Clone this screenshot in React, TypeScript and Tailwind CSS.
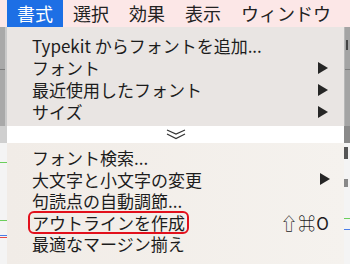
import React from "react";

const menuBar = ["書式", "選択", "効果", "表示", "ウィンドウ"];

const topItems = [
  { label: "Typekit からフォントを追加...", sub: false },
  { label: "フォント", sub: true },
  { label: "最近使用したフォント", sub: true },
  { label: "サイズ", sub: true },
];

const bottomItems = [
  { label: "フォント検索...", sub: false, key: "" },
  { label: "大文字と小文字の変更", sub: true, key: "" },
  { label: "句読点の自動調節...", sub: false, key: "" },
  { label: "アウトラインを作成", sub: false, key: "⇧⌘O", mark: true },
  { label: "最適なマージン揃え", sub: false, key: "" },
];

function Arrow() {
  return (
    <svg width="10" height="12" viewBox="0 0 10 12" className="shrink-0">
      <path d="M0 0 L10 6 L0 12 Z" fill="#262626" />
    </svg>
  );
}

export default function App() {
  return (
    <div
      className="flex h-[264px] w-[350px] flex-col overflow-hidden bg-white text-[#1c1c1c]"
      style={{ fontFamily: '"Noto Sans CJK JP", "Noto Sans", sans-serif' }}
    >
      {/* Menu bar */}
      <div className="flex h-[27px] shrink-0 items-center bg-[#fce7e7] pl-[7px] text-[18px] leading-[27px]">
        {menuBar.map((m, i) => (
          <div
            key={m}
            className={
              i === 0
                ? "flex h-full items-center bg-[#1d6fe5] px-[10px] text-white"
                : "flex h-full items-center px-[10px] text-[#222]"
            }
          >
            {m}
          </div>
        ))}
      </div>

      <div className="flex flex-1">
        {/* background window, left */}
        <div className="flex w-[7px] shrink-0 flex-col">
          <div className="h-[99px] border-r-[2px] border-[#c9c9c9] bg-[#a9a9a9]">
            <div className="mt-[42px] h-px bg-[#7d7d7d]" />
          </div>
          <div className="h-[17px] bg-[#cfcfcf]" />
          <div className="relative flex-1 bg-[#f4f4f4]">
            <div className="absolute left-0 right-0 top-[19px] h-px bg-[#6ccf5c]" />
            <div className="absolute left-0 right-0 top-[77px] h-px bg-[#6ccf5c]" />
            <div className="absolute left-0 right-0 top-[92px] h-px bg-[#4a7de8]" />
            <div className="absolute left-0 right-0 top-[94px] h-px bg-[#e24a4a]" />
          </div>
        </div>

        <div className="flex flex-1 flex-col">
          {/* upper part of menu */}
          <div className="flex h-[99px] flex-col bg-[#e9e5e3] pt-[8px] text-[17px]">
            {topItems.map((it) => (
              <div
                key={it.label}
                className="flex h-[22px] items-center justify-between pl-[25px] pr-[16px] leading-[22px]"
              >
                <span>{it.label}</span>
                {it.sub && <Arrow />}
              </div>
            ))}
          </div>

          {/* scroll indicator */}
          <div className="flex h-[17px] items-center justify-center bg-white">
            <svg width="20" height="11" viewBox="0 0 20 11">
              <path d="M1 1 L10 5 L19 1" fill="none" stroke="#333" strokeWidth="1.2" />
              <path d="M1 5 L10 9.5 L19 5" fill="none" stroke="#333" strokeWidth="1.2" />
            </svg>
          </div>

          {/* lower part of menu */}
          <div className="flex flex-1 flex-col bg-gradient-to-r from-[#f1ece7] to-[#f5f2ee] pt-[4px] text-[17px]">
            {bottomItems.map((it) => (
              <div
                key={it.label}
                className="flex h-[21.5px] items-center justify-between pl-[25px] pr-[14px] leading-[21.5px]"
              >
                <span className="relative">
                  {it.label}
                  {it.mark && (
                    <span className="absolute -bottom-[1px] -left-[4px] -right-[4px] -top-[1px] rounded-[6px] border-2 border-[#e2101c]" />
                  )}
                </span>
                {it.sub && <Arrow />}
                {it.key && <span className="tracking-[1px]">{it.key}</span>}
              </div>
            ))}
          </div>
        </div>

        {/* background window, right */}
        <div className="flex w-[6px] shrink-0 flex-col">
          <div className="h-[99px] border-l border-[#b8b8b8] bg-[#a4a4a4]">
            <div className="ml-[1px] mt-[13px] h-[10px] w-[2px] bg-[#444]" />
            <div className="mt-[19px] h-px bg-[#7d7d7d]" />
          </div>
          <div className="h-[17px] bg-[#8a8a8a]" />
          <div className="relative flex-1 bg-[#f4f4f4]">
            <div className="absolute left-0 top-[4px] h-[12px] w-[4px] bg-[#555]" />
            <div className="absolute left-0 top-[36px] h-[8px] w-[4px] bg-[#888]" />
            <div className="absolute left-0 right-0 top-[75px] h-px bg-[#6ccf5c]" />
            <div className="absolute left-0 right-0 top-[86px] h-px bg-[#4a7de8]" />
          </div>
        </div>
      </div>
    </div>
  );
}
